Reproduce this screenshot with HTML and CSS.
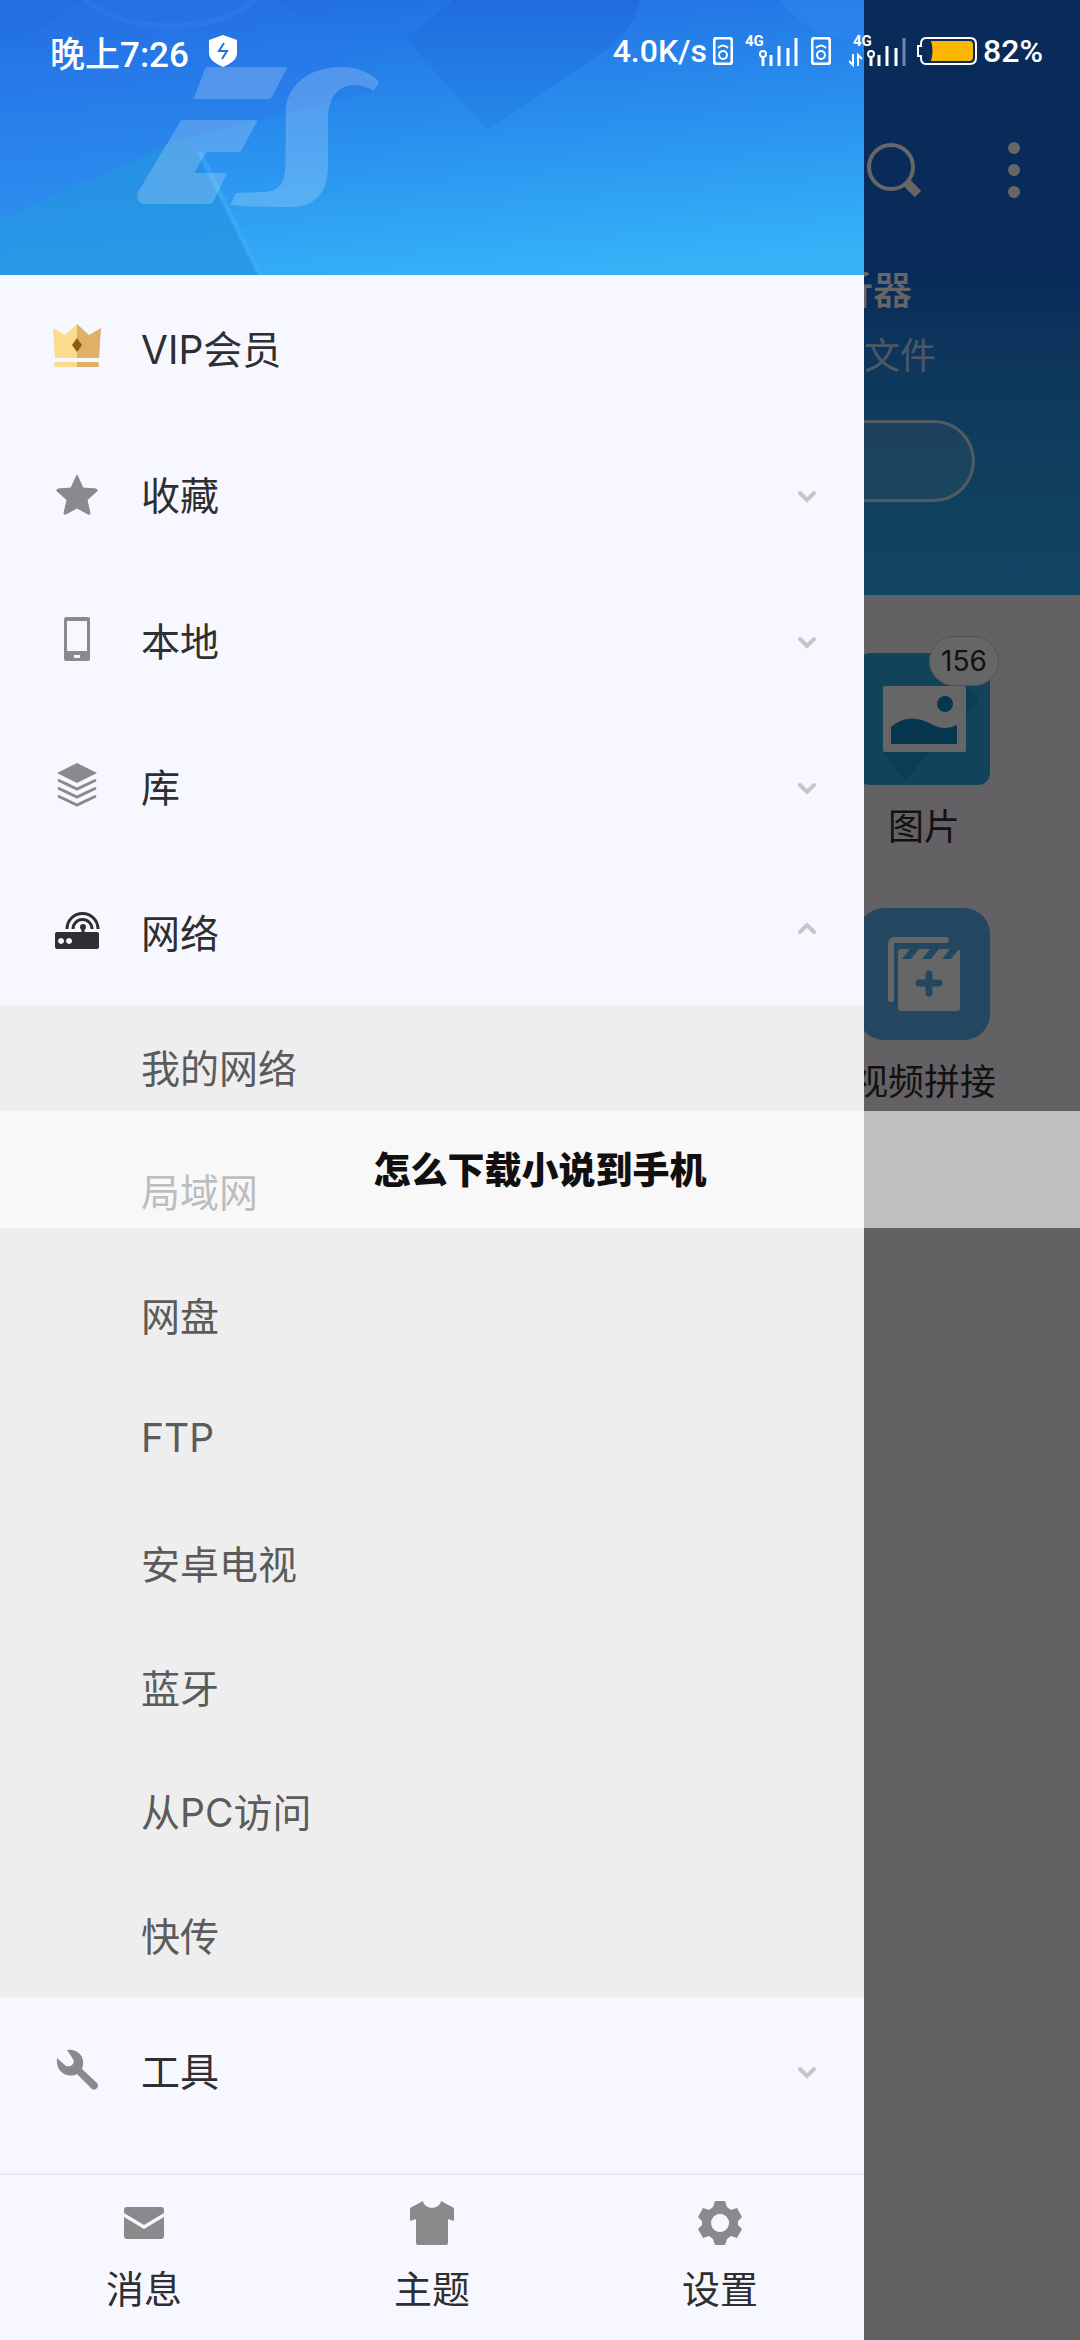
FILE: index.html
```html
<!DOCTYPE html>
<html lang="zh-CN">
<head>
  <meta charset="UTF-8">
  <meta name="viewport" content="width=device-width, initial-scale=1.0">
  <title>ES文件浏览器</title>
  <link rel="stylesheet" href="styles.css">
</head>
<body>

  <!-- Home page behind the drawer -->
  <main class="home">
    <section class="hero">
      <div class="toolbar">
        <button class="icon-button" aria-label="搜索">
          <svg width="56" height="56" viewBox="0 0 56 56"><circle cx="25" cy="25" r="22" fill="none" stroke="#fff" stroke-width="4"/><path d="M40 40l12 12" stroke="#fff" stroke-width="9"/></svg>
        </button>
        <button class="icon-button" aria-label="更多">
          <svg width="12" height="56" viewBox="0 0 12 56"><circle cx="6" cy="6" r="6" fill="#fff"/><circle cx="6" cy="28" r="6" fill="#fff"/><circle cx="6" cy="50" r="6" fill="#fff"/></svg>
        </button>
      </div>
      <h1 class="hero-title">析器</h1>
      <p class="hero-text">文件</p>
      <button class="hero-button" aria-label="分析"></button>
    </section>

    <section class="apps">
      <a href="#" class="app">
        <span class="tile">
          <svg width="132" height="132" viewBox="0 0 132 132">
            <rect width="132" height="132" rx="12" fill="#2ba8e0"/>
            <path d="M25 99h46l-24 29z" fill="#1c98d0"/>
            <path d="M101 34h8l12 15-20 20z" fill="#1c98d0"/>
            <rect x="25" y="33" width="83" height="66" rx="2" fill="#fff"/>
            <circle cx="87" cy="51" r="8" fill="#118ac6"/>
            <path d="M33 91V74c13-11 27-11 42-2 9 4 15 4 24 0v19z" fill="#118ac6"/>
          </svg>
          <span class="badge">156</span>
        </span>
        <span>图片</span>
      </a>
      <a href="#" class="app">
        <span class="tile">
          <svg width="132" height="132" viewBox="0 0 132 132">
            <rect width="132" height="132" rx="26" fill="#57b2f3"/>
            <path d="M33 91V36q0-4 4-4h51" fill="none" stroke="#fff" stroke-width="6" stroke-linecap="round"/>
            <rect x="40" y="41" width="62" height="62" rx="3" fill="#fff"/>
            <path d="M52 41h9l-8 10h-9zM72 41h9l-8 10h-9zM92 41h9l-8 10h-9z" fill="#57b2f3"/>
            <path d="M71 66v19M61 75h20" stroke="#57b2f3" stroke-width="7" stroke-linecap="round"/>
          </svg>
        </span>
        <span>视频拼接</span>
      </a>
    </section>
  </main>

  <div class="scrim"></div>

  <!-- Side drawer -->
  <aside class="drawer">
    <header class="drawer-header">
      <svg class="drawer-art" viewBox="0 0 864 275" preserveAspectRatio="none">
        <defs>
          <linearGradient id="sky" x1="0.35" y1="0" x2="0.6" y2="1">
            <stop offset="0" stop-color="#226fe3"/>
            <stop offset="0.5" stop-color="#2990ee"/>
            <stop offset="1" stop-color="#35b2f8"/>
          </linearGradient>
          <linearGradient id="shade" x1="0" y1="0" x2="0" y2="1">
            <stop offset="0" stop-color="#1f6bdd" stop-opacity="0.9"/>
            <stop offset="1" stop-color="#2387e6" stop-opacity="0.7"/>
          </linearGradient>
        </defs>
        <rect width="864" height="275" fill="url(#sky)"/>
        <path d="M0 220V60L80 0h200L380 90 180 140z" fill="#2b76ea" opacity="0.35"/>
        <path d="M85 0c40 34 130 36 170 0" fill="none" stroke="#3d86f0" stroke-width="6" opacity="0.3"/>
        <path d="M0 220l136-60 36-18c12-4 18 0 24 12l63 121H0z" fill="#2590de" opacity="0.65"/>
        <path d="M200 152l60 123" stroke="#45aef6" stroke-width="5" opacity="0.5"/>
        <path d="M405 38L454 0h186c-3 18-18 40-40 54l-113 76z" fill="url(#shade)"/>
        <path d="M780 0c20 26 44 40 84 40V0z" fill="#2f86ee" opacity="0.6"/>
      </svg>
      <svg class="logo" width="242" height="142" viewBox="0 0 228 142" preserveAspectRatio="none">
        <path d="M66 1h74q2 0 1 2l-14 28q-1 2-3 2H55q-2 0-1-2L64 3q1-2 2-2z"/>
        <path d="M44 54h68q2 0 1 2l-14 27q-1 3-3 3H68q-3 0-4 2l-9 17q-1 2 1 2h27q2 0 1 2l-12 26q-1 3-3 3H8c-7 0-9-6-7-12L40 57q1-3 4-3z"/>
        <path d="M93 127l27-1c18-1 20-14 20-35V48C140 18 163 1 193 1c15 0 27 6 35 15l-5 9c-20-13-43-5-43 28v46c0 30-14 42-35 42-20 0-40 0-57-2z"/>
      </svg>
    </header>

    <nav class="menu">
      <button class="menu-item">
        <svg class="menu-icon" width="48" height="48" viewBox="0 0 48 48">
          <path d="M0 4l12 7L24 0v34H2z" fill="#fbdc8c"/>
          <path d="M24 0l12 11 12-7-2 30H24z" fill="#deb068"/>
          <path d="M3 38h21v5H3q-2 0-2-2 0-3 2-3z" fill="#fbdc8c"/>
          <path d="M24 38h20q2 0 2 3 0 2-2 2H24z" fill="#deb068"/>
          <path d="M24 14l5 7-5 7-5-7z" fill="#8f5c0c"/>
        </svg>
        <span class="menu-label">VIP会员</span>
      </button>
      <button class="menu-item">
        <svg class="menu-icon" width="48" height="48" viewBox="0 0 48 48"><path d="M24 5l6 13 13 1q2 1 1 2L34 30l3 13q0 2-2 1l-11-6-11 6q-2 1-2-1l3-13L4 21q-1-1 1-2l13-1z" fill="#8b898b" stroke="#8b898b" stroke-linejoin="round"/></svg>
        <span class="menu-label">收藏</span>
        <svg class="chevron" width="18" height="18" viewBox="0 0 18 18"><path d="M2 8l7 7 7-7"/></svg>
      </button>
      <button class="menu-item">
        <svg class="menu-icon" width="48" height="48" viewBox="0 0 48 48"><path fill-rule="evenodd" d="M13 1h22q2 0 2 2v40q0 2-2 2H13q-2 0-2-2V3q0-2 2-2zm1 4v30h20V5zm7 34v3h6v-3z" fill="#8b898b"/></svg>
        <span class="menu-label">本地</span>
        <svg class="chevron" width="18" height="18" viewBox="0 0 18 18"><path d="M2 8l7 7 7-7"/></svg>
      </button>
      <button class="menu-item">
        <svg class="menu-icon" width="48" height="48" viewBox="0 0 48 48">
          <path d="M24 1L4 11l20 10 20-10z" fill="#8b898b"/>
          <path d="M5 18l19 9 19-9M5 26l19 9 19-9M5 34l19 9 19-9" fill="none" stroke="#8b898b" stroke-width="3"/>
        </svg>
        <span class="menu-label">库</span>
        <svg class="chevron" width="18" height="18" viewBox="0 0 18 18"><path d="M2 8l7 7 7-7"/></svg>
      </button>
      <button class="menu-item" aria-expanded="true">
        <svg class="menu-icon" width="48" height="48" viewBox="0 0 48 48">
          <path fill-rule="evenodd" d="M4 24h40q2 0 2 2v13q0 2-2 2H4q-2 0-2-2V26q0-2 2-2zm4 6a3 3 0 1 0 .1 0zm8 0a3 3 0 1 0 .1 0z" fill="#2f2e30"/>
          <path d="M14 21a15 15 0 0 1 31 0M20 21a9 9 0 0 1 19 0" fill="none" stroke="#2f2e30" stroke-width="3"/>
          <circle cx="30" cy="19" r="3" fill="#2f2e30"/><path d="M30 19v7" stroke="#2f2e30" stroke-width="3"/>
        </svg>
        <span class="menu-label">网络</span>
        <svg class="chevron" width="18" height="18" viewBox="0 0 18 18"><path d="M2 9l7-7 7 7"/></svg>
      </button>

      <div class="submenu">
        <a href="#">我的网络</a>
        <a href="#">局域网</a>
        <a href="#">网盘</a>
        <a href="#">FTP</a>
        <a href="#">安卓电视</a>
        <a href="#">蓝牙</a>
        <a href="#">从PC访问</a>
        <a href="#">快传</a>
      </div>

      <button class="menu-item">
        <svg class="menu-icon" width="48" height="48" viewBox="0 0 48 48"><path d="M14 4c8-2 18 5 16 15l-1 4 15 14q2 3 0 5-2 3-5 1L24 28c-9 5-22-2-20-16l9 8q4 1 6-1 3-3 1-6z" fill="#8b898b"/></svg>
        <span class="menu-label">工具</span>
        <svg class="chevron" width="18" height="18" viewBox="0 0 18 18"><path d="M2 8l7 7 7-7"/></svg>
      </button>
    </nav>

    <footer class="drawer-footer">
      <button class="footer-item">
        <svg width="44" height="44" viewBox="0 0 44 44" fill="#8b898b"><path d="M5 6h34q3 0 3 3v3L22 24 2 12V9q0-3 3-3z"/><path d="M2 16l20 12 20-12v19q0 3-3 3H5q-3 0-3-3z"/></svg>
        <span>消息</span>
      </button>
      <button class="footer-item">
        <svg width="44" height="44" viewBox="0 0 44 44" fill="#8b898b"><path d="M13 0c1 9 17 9 18 0l13 7v13l-6-2v24q0 2-2 2H8q-2 0-2-2V18l-6 2V7z"/></svg>
        <span>主题</span>
      </button>
      <button class="footer-item">
        <svg width="44" height="44" viewBox="0 0 44 44" fill="#8b898b"><path fill-rule="evenodd" d="M17 0h10l2 6 4 3 6-2 5 9-4 4v4l4 4-5 9-6-2-4 3-2 6H17l-2-6-4-3-6 2-5-9 4-4v-4l-4-4 5-9 6 2 4-3zm5 13a9 9 0 1 0 .1 0z"/></svg>
        <span>设置</span>
      </button>
    </footer>
  </aside>

  <!-- Status bar -->
  <div class="status-bar">
    <span class="time">晚上7:26</span>
    <svg class="shield" width="28" height="32" viewBox="0 0 28 32"><path d="M14 0l14 5v13c0 7-7 11-14 14C7 29 0 25 0 18V5z" fill="#fff"/><path d="M15 8l-5 8h8l-5 8" fill="none" stroke="#2273e2" stroke-width="2"/></svg>
    <div class="status-right">
      <span>4.0K/s</span>
      <svg class="sim" width="20" height="28" viewBox="0 0 20 28" fill="none" stroke="#fff" stroke-width="2"><rect x="1" y="1" width="18" height="26" rx="3" stroke-width="3"/><circle cx="10" cy="18" r="4"/><path d="M5 11q5-5 10 0"/></svg>
      <svg class="signal" width="54" height="42" viewBox="0 -4 54 42"><text x="0" y="12" class="signal-text">4G</text><circle cx="18" cy="20" r="3" fill="none" stroke="#fff" stroke-width="2"/><path d="M18 23v9M26 21v11M34 12v20M43 14v18M51 4v28" stroke="#fff" stroke-width="3"/></svg>
      <svg class="sim" width="20" height="28" viewBox="0 0 20 28" fill="none" stroke="#fff" stroke-width="2"><rect x="1" y="1" width="18" height="26" rx="3" stroke-width="3"/><circle cx="10" cy="18" r="4"/><path d="M5 11q5-5 10 0"/></svg>
      <svg class="signal" width="60" height="42" viewBox="0 -4 60 42"><text x="4" y="12" class="signal-text">4G</text><path d="M4 20v11l-4-4M9 32V21l4 4" fill="none" stroke="#fff" stroke-width="2"/><circle cx="22" cy="20" r="3" fill="none" stroke="#fff" stroke-width="2"/><path d="M22 23v9M30 21v11M38 12v20M47 14v18" stroke="#fff" stroke-width="3"/><path d="M55 4v28" stroke="#7486ab" stroke-width="3"/></svg>
      <svg class="battery" width="60" height="28" viewBox="0 0 60 28"><path d="M9 1h44q6 0 6 6v14q0 6-6 6H9q-5 0-5-6v-2H1V9h3V7q0-6 5-6z" fill="none" stroke="#fff" stroke-width="2"/><path d="M14 4h38q4 0 4 4v12q0 4-4 4H14q3-10 0-20z" fill="#fdb600"/></svg>
      <span>82%</span>
    </div>
  </div>

  <!-- Caption strip -->
  <div class="caption">怎么下载小说到手机</div>

</body>
</html>
```
FILE: styles.css
```css
* {
  margin: 0;
  padding: 0;
  box-sizing: border-box;
}
body {
  position: relative;
  min-height: 100vh;
  background-color: #faf2fa;
  color: #2f2e30;
  font-family: Inter, "Noto Sans CJK SC", sans-serif;
  font-size: 39px;
  overflow-x: hidden;
}
button {
  border: none;
  background: none;
  color: inherit;
  font: inherit;
  cursor: pointer;
}
a {
  color: inherit;
  text-decoration: none;
}
svg {
  display: block;
  flex-shrink: 0;
}

/* Home page */
.hero {
  display: flex;
  flex-direction: column;
  align-items: flex-end;
  height: 595px;
  padding-top: 142px;
  background: linear-gradient(#146cde 45%, #2487e6 60%, #2a9eea 80%, #2cb0fa);
  color: #fff;
}
.toolbar {
  display: flex;
  gap: 86px;
  padding-right: 60px;
}
.hero-title {
  margin: 64px 168px 0 0;
  font-size: 39px;
  font-weight: 500;
  line-height: 56px;
}
.hero-text {
  margin: 12px 144px 0 0;
  font-size: 36px;
  line-height: 52px;
  opacity: 0.7;
}
.hero-button {
  width: 80%;
  height: 82px;
  margin: 38px 105px 0 0;
  border: 3px solid rgba(255, 255, 255, 0.7);
  border-radius: 41px;
  background-color: rgba(255, 255, 255, 0.14);
}
.apps {
  display: grid;
  grid-template-columns: repeat(4, 1fr);
  row-gap: 55px;
  padding: 58px 28px;
}
.app {
  grid-column: 4;
  display: flex;
  flex-direction: column;
  align-items: center;
  gap: 16px;
  font-size: 36px;
  line-height: 52px;
  white-space: nowrap;
}
.tile {
  position: relative;
}
.badge {
  position: absolute;
  top: -17px;
  right: -9px;
  width: 70px;
  height: 50px;
  border: 1px solid #d0cdd0;
  border-radius: 25px;
  background-color: #fff;
  font-size: 28px;
  line-height: 48px;
  text-align: center;
}
.scrim {
  position: absolute;
  inset: 0;
  background-color: rgba(0, 0, 0, 0.6);
}

/* Drawer */
.drawer {
  position: absolute;
  top: 0;
  left: 0;
  display: flex;
  flex-direction: column;
  width: 80%;
  min-height: 100%;
  background-color: #f7f8ff;
}
.drawer-header {
  position: relative;
  height: 275px;
  padding: 66px 0 0 137px;
}
.drawer-art {
  position: absolute;
  inset: 0;
  width: 100%;
  height: 100%;
}
.logo {
  position: relative;
  fill: rgba(255, 255, 255, 0.2);
}
.menu {
  flex: 1;
}
.menu-item {
  display: flex;
  align-items: center;
  gap: 40px;
  width: 100%;
  height: 146px;
  padding: 0 48px 0 53px;
  text-align: left;
}
.menu-label {
  flex: 1;
  padding-bottom: 3px;
}
.chevron {
  fill: none;
  stroke: #c6c5c9;
  stroke-width: 4;
  stroke-linecap: round;
}
.submenu {
  background-color: #eee;
  color: #5b5b5b;
}
.submenu a {
  display: flex;
  align-items: center;
  height: 124px;
  padding: 0 0 3px 141px;
}
.drawer-footer {
  display: flex;
  height: 167px;
  border-top: 2px solid #e9e9f3;
}
.footer-item {
  flex: 1;
  display: flex;
  flex-direction: column;
  align-items: center;
  gap: 16px;
  padding-top: 26px;
  font-size: 38px;
  line-height: 56px;
}

/* Status bar */
.status-bar {
  position: absolute;
  top: 0;
  left: 0;
  display: flex;
  align-items: center;
  width: 100%;
  height: 102px;
  padding: 0 37px 0 50px;
  color: #fff;
  font-family: Roboto, "Noto Sans CJK SC", sans-serif;
  font-size: 32px;
  font-weight: 500;
}
.time {
  font-size: 35px;
}
.shield {
  margin-left: 20px;
}
.status-right {
  display: flex;
  align-items: center;
  margin-left: auto;
}
.sim {
  margin: 0 12px 0 6px;
}
.signal-text {
  fill: #fff;
  font-size: 15px;
  font-weight: 700;
}
.signal + .sim {
  margin: 0 18px 0 12px;
}
.battery {
  margin: 0 6px 0 8px;
}

/* Caption */
.caption {
  position: absolute;
  top: 1111px;
  left: 0;
  width: 100%;
  height: 117px;
  background-color: rgba(255, 255, 255, 0.6);
  color: #120f10;
  font-family: "Noto Sans CJK SC", sans-serif;
  font-size: 37px;
  font-weight: 900;
  line-height: 114px;
  text-align: center;
}
```
